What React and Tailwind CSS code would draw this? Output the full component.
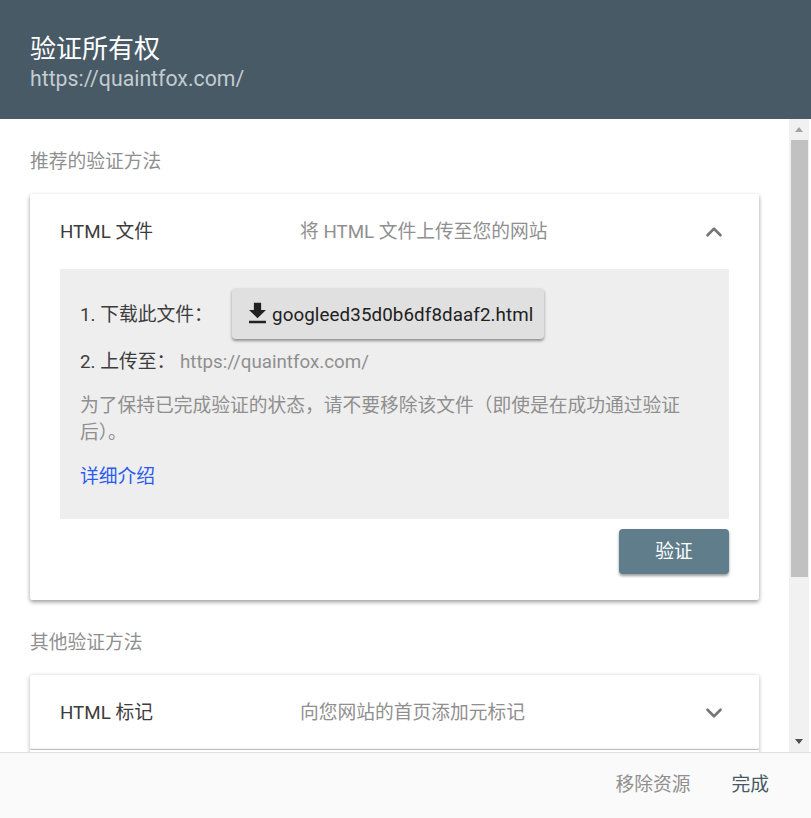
import { ChevronUp, ChevronDown } from 'lucide-react';

const FONT = 'font-[Roboto,"Noto_Sans_CJK_SC",sans-serif]';

function MethodHeader({ title, desc, open }) {
  const Icon = open ? ChevronUp : ChevronDown;
  return (
    <div className="flex h-[75px] items-center pl-[30px] pr-[32px]">
      <div className="w-[240px] pt-[2px] text-[18.75px] text-[#3c3c3c]">{title}</div>
      <div className="flex-1 pt-[2px] text-[18.75px] text-[#8f8f8f]">{desc}</div>
      <Icon className="h-[26px] w-[26px] text-[#757575]" strokeWidth={2.4} />
    </div>
  );
}

export default function App() {
  return (
    <div className={`flex h-[818px] w-[811px] flex-col overflow-hidden bg-white ${FONT}`}>
      <header className="flex h-[119px] shrink-0 flex-col justify-center bg-[#485a66] pl-[30px] pt-[6px]">
        <h1 className="text-[26px] leading-[32px] font-normal text-white">验证所有权</h1>
        <div className="text-[21.25px] leading-[28px] text-[#c3ccd1]">https://quaintfox.com/</div>
      </header>

      <div className="flex min-h-0 flex-1">
        <main className="min-w-0 flex-1 overflow-hidden px-[30px] pt-[31px]">
          <h2 className="text-[18.75px] leading-[24px] text-[#8f8f8f]">推荐的验证方法</h2>

          <section className="mt-[20px] rounded-[2px] bg-white shadow-[0_2px_4px_rgba(0,0,0,0.4)]">
            <MethodHeader title="HTML 文件" desc="将 HTML 文件上传至您的网站" open />
            <div className="mx-[30px] h-[250px] bg-[#eeeeee] px-[20px] pt-[19px]">
              <div className="flex items-center text-[18.75px] text-[#3c3c3c]">
                <span className="w-[152px] pt-[4px]">1. 下载此文件：</span>
                <button className="flex h-[51px] items-center rounded-[4px] bg-[#e0e0e0] px-[11px] tracking-[0.1px] text-[#212121] shadow-[0_2px_3px_rgba(0,0,0,0.4)]">
                  <svg viewBox="0 0 24 24" className="h-[29px] w-[29px]" fill="#212121">
                    <path d="M19 9h-4V3H9v6H5l7 7 7-7zM5 18v2h14v-2H5z" />
                  </svg>
                  <span className="pt-[3px]">googleed35d0b6df8daaf2.html</span>
                </button>
              </div>
              <div className="mt-[11px] flex items-center text-[18.75px] leading-[24px]">
                <span className="w-[100px] text-[#3c3c3c]">2. 上传至：</span>
                <span className="text-[#8f8f8f]">https://quaintfox.com/</span>
              </div>
              <p className="mt-[19px] w-[610px] text-[18.75px] leading-[27px] text-[#8f8f8f]">
                为了保持已完成验证的状态，请不要移除该文件（即使是在成功通过验证后）。
              </p>
              <a className="mt-[16px] block text-[18.75px] leading-[28px] text-[#2a5bf0]">详细介绍</a>
            </div>
            <div className="flex h-[81px] justify-end pr-[30px] pt-[10px]">
              <button className="h-[45px] w-[110px] rounded-[4px] bg-[#607d8b] pt-[2px] text-[18.75px] text-white shadow-[0_2px_3px_rgba(0,0,0,0.4)]">
                验证
              </button>
            </div>
          </section>

          <h2 className="mt-[31px] text-[18.75px] leading-[24px] text-[#8f8f8f]">其他验证方法</h2>

          <section className="mt-[20px] h-[75px] overflow-hidden rounded-[2px] border-b border-[#ccc] bg-white shadow-[0_1px_4px_rgba(0,0,0,0.3)]">
            <MethodHeader title="HTML 标记" desc="向您网站的首页添加元标记" />
          </section>
          <section className="h-[10px] bg-white shadow-[0_1px_4px_rgba(0,0,0,0.3)]" />
        </main>

        {/* scrollbar */}
        <div className="flex w-[22px] shrink-0 flex-col pr-[2px]">
          <div className="flex h-full flex-col items-center bg-[#f1f1f1]">
            <div className="flex h-[21px] w-full shrink-0 items-center justify-center">
              <div className="h-0 w-0 border-x-[4.5px] border-b-[5px] border-x-transparent border-b-[#a3a3a3]" />
            </div>
            <div className="h-[437px] w-[17px] shrink-0 bg-[#c1c1c1]" />
            <div className="flex-1" />
            <div className="flex h-[21px] w-full shrink-0 items-center justify-center">
              <div className="h-0 w-0 border-x-[4.5px] border-t-[5px] border-x-transparent border-t-[#505050]" />
            </div>
          </div>
        </div>
      </div>

      <footer className="flex h-[66px] shrink-0 items-center justify-end gap-[41px] border-t border-[#e0e0e0] bg-[#fafafa] pr-[42px] text-[18.75px]">
        <span className="text-[#8f8f8f]">移除资源</span>
        <span className="text-[#455a64]">完成</span>
      </footer>
    </div>
  );
}
